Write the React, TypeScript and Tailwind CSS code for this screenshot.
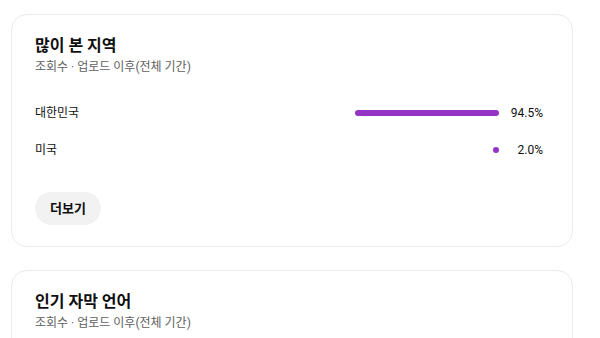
const font = { fontFamily: 'Roboto, "Noto Sans CJK KR", sans-serif' };

const regions = [
  { name: '대한민국', pct: 94.5 },
  { name: '미국', pct: 2.0 },
];

const Card = ({ title, children }: { title: string; children?: React.ReactNode }) => (
  <div className="ml-[11px] w-[562px] rounded-2xl border border-[#ebebeb] bg-white pl-[23px] pr-[29px] pt-[20px] pb-[21px]">
    <h2 className="text-[16px] leading-[22px] font-semibold text-[#0f0f0f]">{title}</h2>
    <p className="mt-[2px] text-[12px] leading-[16px] text-[#606060]">조회수 · 업로드 이후(전체 기간)</p>
    {children}
  </div>
);

export default function App() {
  return (
    <div className="w-[600px] h-[338px] overflow-hidden bg-white pt-[14px] flex flex-col gap-[23px]" style={font}>
      <Card title="많이 본 지역">
        <div className="mt-[28px] flex flex-col gap-[17px]">
          {regions.map((r) => (
            <div key={r.name} className="flex items-center h-[20px]">
              <span className="flex-1 text-[12px] text-[#0f0f0f]">{r.name}</span>
              <div className="w-[152px] flex justify-end">
                <div
                  className="h-[6px] min-w-[6px] rounded-full bg-[#9334c4]"
                  style={{ width: `${r.pct}%` }}
                />
              </div>
              <span className="w-[44px] text-right text-[12px] text-[#0f0f0f]">{r.pct.toFixed(1)}%</span>
            </div>
          ))}
        </div>
        <button className="mt-[32px] h-[33px] px-[15px] rounded-full bg-[#f2f2f2] text-[13px] font-semibold text-[#0f0f0f]">
          더보기
        </button>
      </Card>
      <Card title="인기 자막 언어">
        <div className="h-[120px]" />
      </Card>
    </div>
  );
}
